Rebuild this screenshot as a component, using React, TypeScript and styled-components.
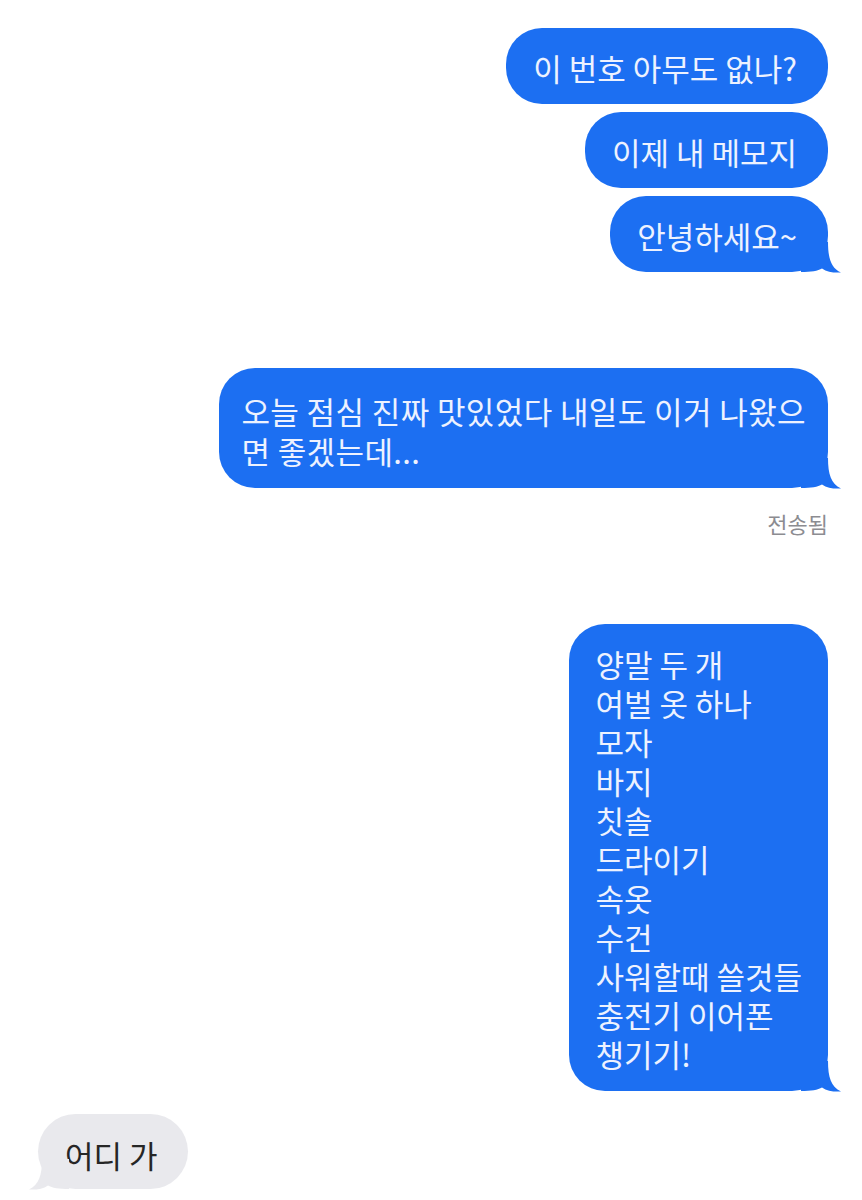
import React from "react"
import styled, { createGlobalStyle } from "styled-components"

const BLUE = "#1c6ff2"
const GRAY = "#e9e9ed"

const GlobalStyle = createGlobalStyle`
	body{
		margin: 0;
		background: #ffffff;
	}
`

const Page = styled.div`
	box-sizing: border-box;
	display: flex;
	flex-flow: column;
	width: 862px;
	min-height: 1200px;
	padding: 28px 34px 0 38px;
	font-family: "Noto Sans CJK KR", "Noto Sans", sans-serif;
	background: #ffffff;
`

const Group = styled.div<{ $top?: number; $align?: "start" | "end" }>`
	display: flex;
	flex-flow: column;
	align-items: ${p => (p.$align === "start" ? "flex-start" : "flex-end")};
	gap: 8px;
	margin-top: ${p => p.$top ?? 0}px;
`

const Bubble = styled.div<{ $padX?: number; $padR?: number; $padT?: number; $padB?: number; $lh?: number; $track?: number }>`
	position: relative;
	box-sizing: border-box;
	padding: ${p => p.$padT ?? 20}px ${p => p.$padR ?? 31}px ${p => p.$padB ?? 16}px ${p => p.$padX ?? 27}px;
	border-radius: 36px;
	background: ${BLUE};
	color: #edf2ff;
	font-size: 31px;
	line-height: ${p => p.$lh ?? 40}px;
	letter-spacing: ${p => p.$track ?? 0}px;
	white-space: nowrap;
`

const Received = styled.div`
	position: relative;
	box-sizing: border-box;
	padding: 21px 30px 14px 27px;
	border-radius: 38px;
	background: ${GRAY};
	color: #262626;
	font-size: 31px;
	line-height: 40px;
	white-space: nowrap;
`

const TailSvg = styled.svg<{ $side: "left" | "right" }>`
	position: absolute;
	bottom: -1px;
	width: 40px;
	height: 31px;
	${p => (p.$side === "right" ? "right: -13px;" : "left: -9px; transform: scaleX(-1);")}
`

const Status = styled.div`
	margin-top: 14px;
	align-self: flex-end;
	color: #8c8c91;
	font-size: 22px;
	line-height: 26px;
`

function Tail({ side, color }: { side: "left" | "right"; color: string }) {
	return (
		<TailSvg $side={side} viewBox="0 0 40 31" aria-hidden>
			<path
				d="M0 0 H27 C27 16 30 26 40 30.5 C33 31 26 30 21 26.5 C17 29 10 30 0 30 Z"
				fill={color}
			/>
		</TailSvg>
	)
}

const packingList = [
	"양말 두 개",
	"여벌 옷 하나",
	"모자",
	"바지",
	"칫솔",
	"드라이기",
	"속옷",
	"수건",
	"사워할때 쓸것들",
	"충전기 이어폰",
	"챙기기!",
]

export default function App() {
	return (
		<>
			<GlobalStyle />
			<Page>
				<Group>
					<Bubble>이 번호 아무도 없나?</Bubble>
					<Bubble>이제 내 메모지</Bubble>
					<Bubble>
						안녕하세요~
						<Tail side="right" color={BLUE} />
					</Bubble>
				</Group>

				<Group $top={96}>
					<Bubble $padX={22} $padR={22} $padT={23} $padB={17} $track={0.4}>
						오늘 점심 진짜 맛있었다 내일도 이거 나왔으
						<br />
						면 좋겠는데...
						<Tail side="right" color={BLUE} />
					</Bubble>
					<Status>전송됨</Status>
				</Group>

				<Group $top={88}>
					<Bubble $padX={26} $padR={26} $padT={20} $padB={18} $lh={39}>
						{packingList.map(item => (
							<div key={item}>{item}</div>
						))}
						<Tail side="right" color={BLUE} />
					</Bubble>
				</Group>

				<Group $top={23} $align="start">
					<Received>
						어디 가
						<Tail side="left" color={GRAY} />
					</Received>
				</Group>
			</Page>
		</>
	)
}
